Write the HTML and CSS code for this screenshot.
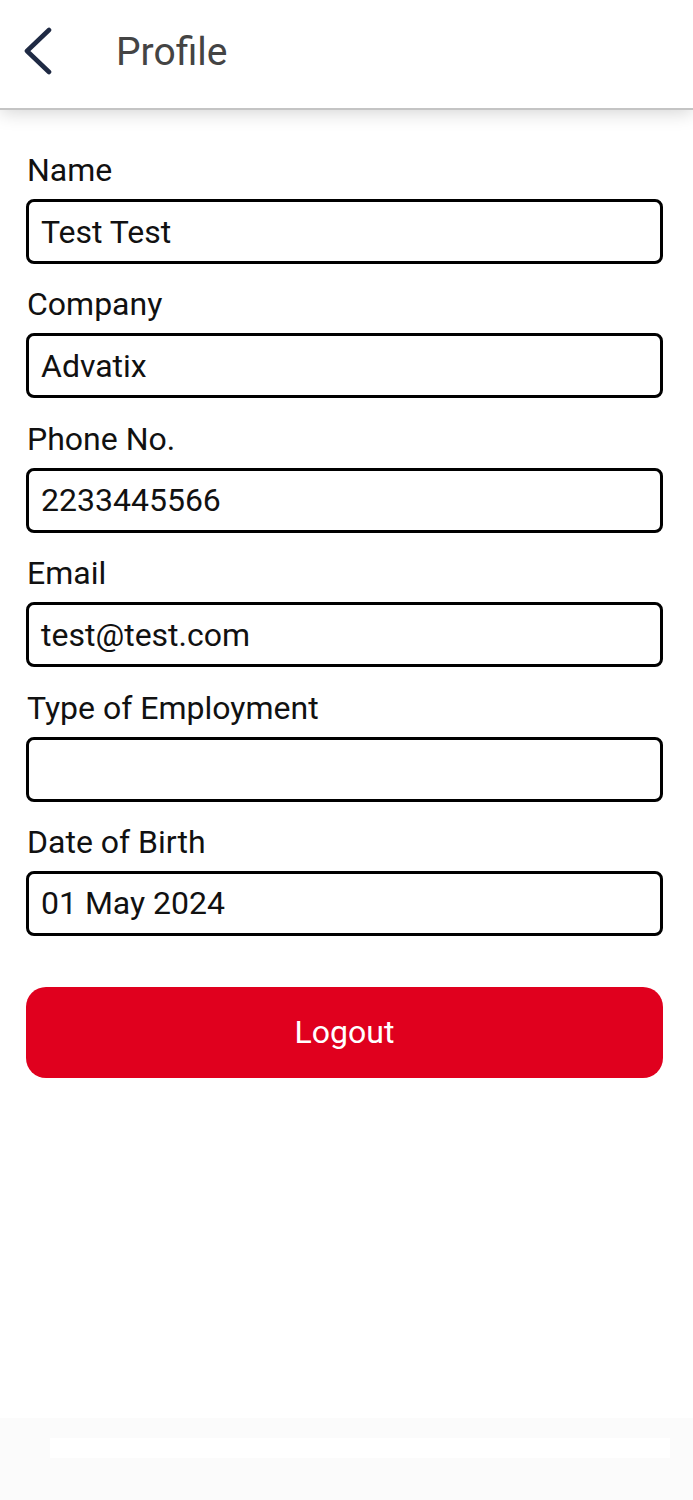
FILE: index.html
```html
<!DOCTYPE html>
<html lang="en">
<head>
    <meta charset="UTF-8">
    <meta name="viewport" content="width=device-width, initial-scale=1.0">
    <title>Profile</title>

    <link rel="stylesheet" href="styles.css">
</head>
<body>
    <header class="topbar">
        <button class="back" type="button" aria-label="Back">
            <svg width="32" height="48" viewBox="0 0 32 48">
                <path d="M26 3 L4 24 L26 45" fill="none" stroke="#1f2a44" stroke-width="4.6" stroke-linecap="round" stroke-linejoin="round"/>
            </svg>
        </button>
        <h1 class="title">Profile</h1>
    </header>

    <main class="content">
        <div class="field">
            <label class="label">Name</label>
            <div class="box">Test Test</div>
        </div>
        <div class="field">
            <label class="label">Company</label>
            <div class="box">Advatix</div>
        </div>
        <div class="field">
            <label class="label">Phone No.</label>
            <div class="box">2233445566</div>
        </div>
        <div class="field">
            <label class="label">Email</label>
            <div class="box">test@test.com</div>
        </div>
        <div class="field">
            <label class="label">Type of Employment</label>
            <div class="box"></div>
        </div>
        <div class="field">
            <label class="label">Date of Birth</label>
            <div class="box">01 May 2024</div>
        </div>

        <button class="logout" type="button">Logout</button>
    </main>

    <footer class="bottom">
        <div class="bottom-bar"></div>
    </footer>
</body>
</html>
```

FILE: styles.css
```css
body {
    font-family: Roboto, 'Liberation Sans', sans-serif;
    background-color: #fff;
    margin: 0;
    padding: 0;
    min-height: 1500px;
    display: flex;
    flex-direction: column;
}

.topbar {
    height: 108px;
    display: flex;
    align-items: center;
    background-color: #fff;
    box-shadow: 0 2px 0 #c4c4c4, 0 4px 18px rgba(0, 0, 0, 0.18);
    position: relative;
    z-index: 1;
}

.back {
    width: 40px;
    height: 50px;
    margin-left: 23px;
    margin-top: -6px;
    padding: 0;
    border: none;
    background: none;
    display: flex;
    align-items: center;
}

.title {
    margin: -4px 0 0 53px;
    font-size: 39px;
    font-weight: 400;
    color: #444;
}

.content {
    padding: 48px 30px 0 26px;
}

.field {
    margin-bottom: 26.4px;
}

.label {
    display: block;
    font-size: 32px;
    line-height: 28px;
    color: #111;
    margin-bottom: 15px;
    padding-left: 1px;
}

.box {
    height: 65px;
    box-sizing: border-box;
    border: 3px solid #000;
    border-radius: 8px;
    padding: 0 12px;
    display: flex;
    align-items: center;
    font-size: 32px;
    color: #111;
}

.logout {
    display: block;
    width: 100%;
    height: 91px;
    margin-top: 51px;
    border: none;
    border-radius: 20px;
    background-color: #e0001e;
    color: #fff;
    font-family: Roboto, 'Liberation Sans', sans-serif;
    font-size: 32px;
    cursor: pointer;
}

.bottom {
    margin-top: auto;
    height: 82px;
    background-color: #fbfbfb;
    padding: 20px 23px 0 50px;
    box-sizing: border-box;
}

.bottom-bar {
    height: 20px;
    background-color: #fff;
}
```
